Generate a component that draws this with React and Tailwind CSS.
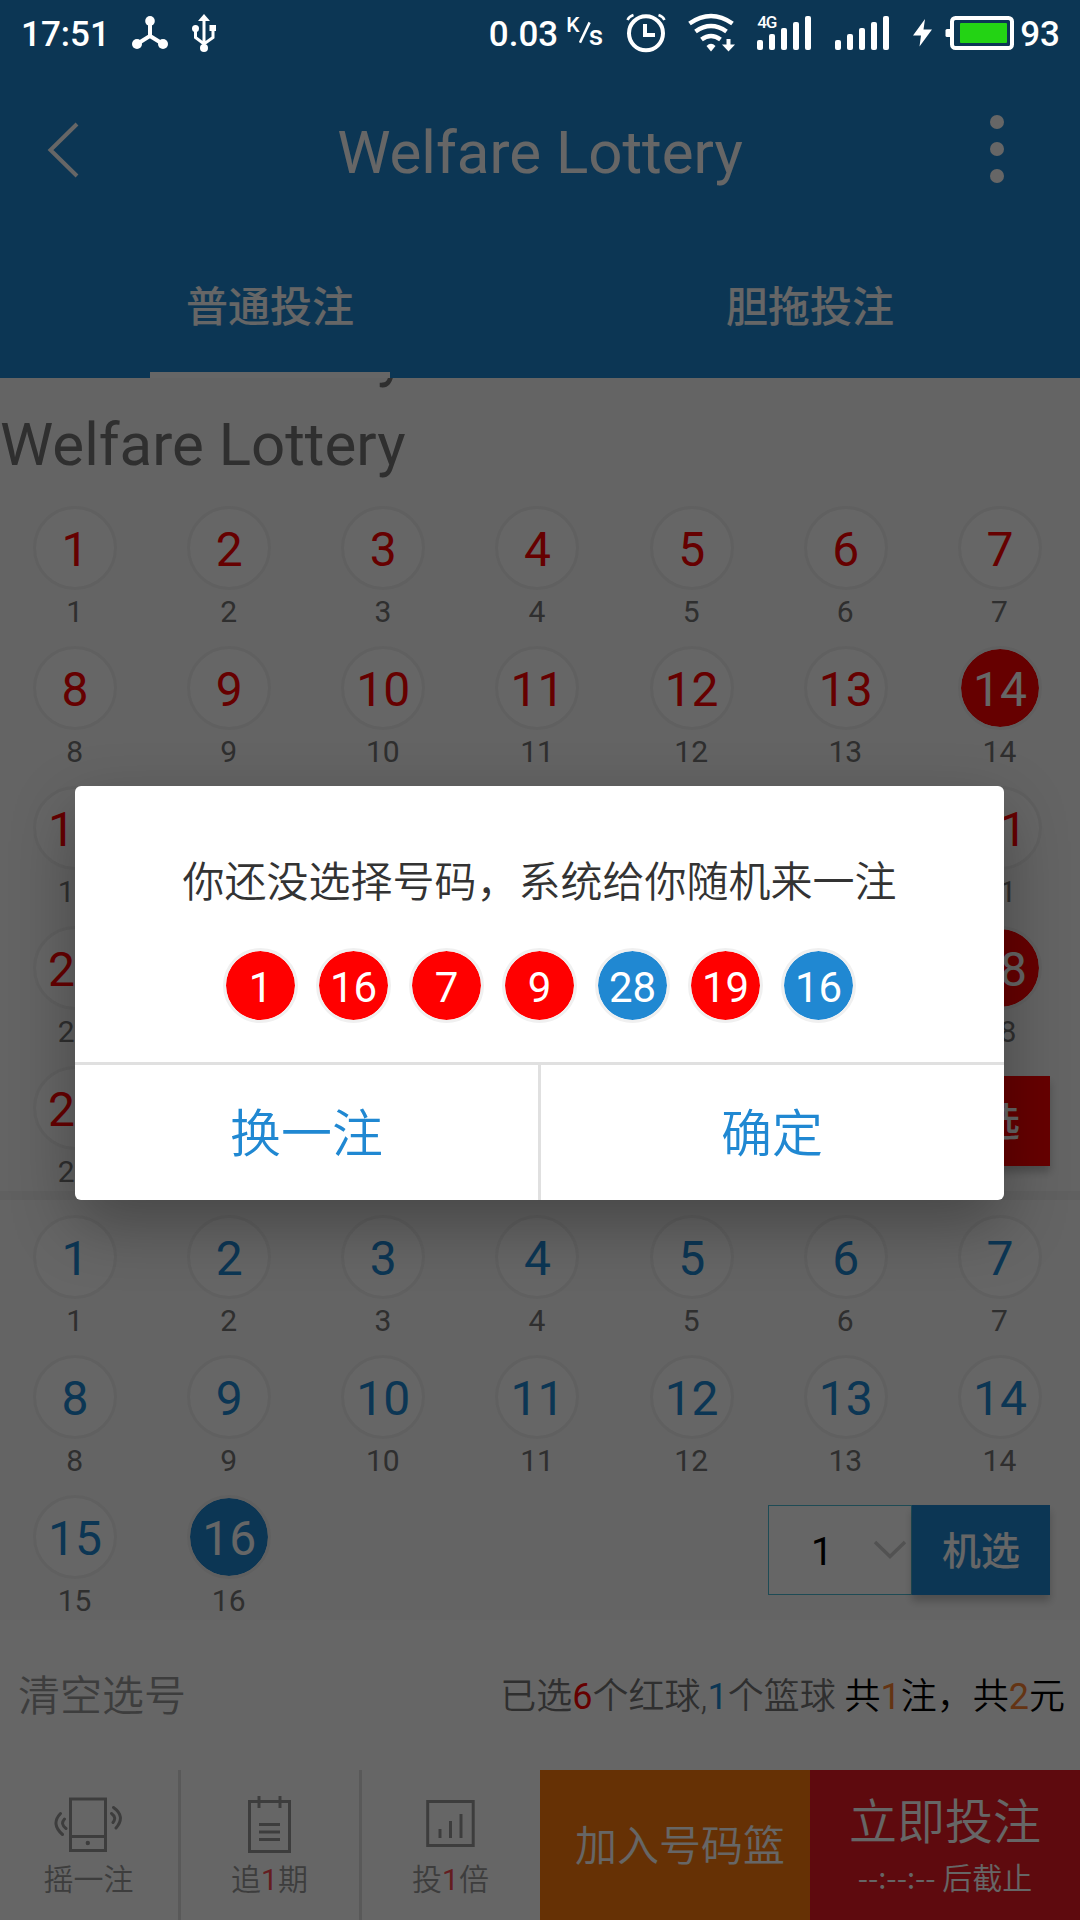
import React from "react";

const RED_SELECTED = [14, 17, 19, 24, 26, 28];
const BLUE_SELECTED = [16];
const RED_NUMBERS = Array.from({ length: 33 }, (_, i) => i + 1);
const BLUE_NUMBERS = Array.from({ length: 16 }, (_, i) => i + 1);

const RANDOM_PICK = [
  { n: 1, blue: false },
  { n: 16, blue: false },
  { n: 7, blue: false },
  { n: 9, blue: false },
  { n: 28, blue: true },
  { n: 19, blue: false },
  { n: 16, blue: true },
];

function ShareIcon() {
  return (
    <svg className="ml-[26px] h-9 w-[38px] shrink-0" viewBox="131 15 38 36" fill="#fff" stroke="#fff">
      <path d="M150 21V36L137 44M150 36L163 44" fill="none" strokeWidth="4" />
      <ellipse cx="150" cy="21" rx="4.8" ry="5" stroke="none" />
      <circle cx="137" cy="44" r="5" stroke="none" />
      <circle cx="163" cy="44" r="5" stroke="none" />
    </svg>
  );
}

function UsbIcon() {
  return (
    <svg className="ml-[22px] h-10 w-[26px] shrink-0" viewBox="191 13 26 40" fill="#fff">
      <path d="M204 18V46M195.500 28V37.500L204 44L213 37.500V28" fill="none" stroke="#fff" strokeWidth="3" />
      <path d="M204 14L210 21H198Z" />
      <circle cx="195.500" cy="28.500" r="3.500" />
      <rect x="209.500" y="25" width="6.500" height="6" />
      <circle cx="204" cy="48" r="4" />
    </svg>
  );
}

function AlarmIcon() {
  return (
    <svg className="ml-[22px] h-10 w-[42px] shrink-0" viewBox="625 13 42 40" fill="none" stroke="#fff">
      <circle cx="646" cy="33.300" r="17" strokeWidth="4" />
      <path d="M645 24V35H655" strokeWidth="4" />
      <path d="M627.500 20Q629 16.500 633.500 15M664.500 20Q663 16.500 658.500 15" strokeWidth="2.500" />
    </svg>
  );
}

function WifiIcon() {
  return (
    <svg className="ml-5 h-10 w-[50px] shrink-0" viewBox="687 13 50 40" fill="none" stroke="#fff" strokeWidth="4.500">
      <path d="M689.500 23.500Q711 8.500 732.500 23.500" />
      <path d="M695.500 31.500Q711 20.500 726.500 31.500" />
      <path d="M701.500 39.500Q711 32.500 720.500 39.500" />
      <path d="M706.500 46Q711 41.500 715.500 46L711 51.500Z" fill="#fff" stroke="none" />
      <path d="M728.500 39V46" strokeWidth="4" />
      <path d="M722 44.500H735L728.500 51.500Z" fill="#fff" stroke="none" />
    </svg>
  );
}

function SignalBars() {
  return (
    <svg className="h-[34px] w-[54px]" viewBox="0 0 54 34" fill="#fff">
      <rect x="0" y="24" width="6" height="10" rx="2" />
      <rect x="12" y="18" width="6" height="16" rx="2" />
      <rect x="24" y="12" width="6" height="22" rx="2" />
      <rect x="36" y="6" width="6" height="28" rx="2" />
      <rect x="48" y="0" width="6" height="34" rx="2" />
    </svg>
  );
}

function BoltIcon() {
  return (
    <svg className="ml-6 h-7 w-5 shrink-0" viewBox="913 19 20 28" fill="#fff">
      <path d="M925 19L913 35.500H921L919.500 46.500L932 29.500H923.500Z" />
    </svg>
  );
}

function BatteryIcon() {
  return (
    <svg className="ml-3 h-[34px] w-[69px] shrink-0" viewBox="945 16 69 34">
      <rect x="945.500" y="29" width="6" height="8" rx="1.500" fill="#fff" />
      <rect x="952" y="18" width="60" height="30" rx="3.500" fill="none" stroke="#fff" strokeWidth="4" />
      <rect x="960" y="23" width="47" height="20" rx="1" fill="#23d314" />
    </svg>
  );
}

function StatusBar() {
  return (
    <div className="relative z-20 flex h-[66px] items-center pl-[21px] pr-5 text-[35px] leading-none font-medium text-white">
      <span className="w-[84px] pt-[2px]">17:51</span>
      <ShareIcon />
      <UsbIcon />
      <span className="ml-auto pt-[2px]">0.03</span>
      <span className="ml-[8px] flex h-10 w-[37px] items-start leading-none">
        <span className="mt-[2px] w-[13px] text-[21px]">K</span>
        <svg className="mt-[8px] h-[23px] w-[12px]" viewBox="0 0 12 23">
          <path d="M1 22L11 1" stroke="#fff" strokeWidth="2.600" />
        </svg>
        <span className="mt-[9px] -ml-[2px] text-[28px]">s</span>
      </span>
      <AlarmIcon />
      <WifiIcon />
      <span className="relative ml-5 flex">
        <span className="absolute -top-[2px] left-0 text-[17px] leading-none tracking-[-1px]">4G</span>
        <SignalBars />
      </span>
      <span className="ml-6 flex">
        <SignalBars />
      </span>
      <BoltIcon />
      <BatteryIcon />
      <span className="ml-[6px] pt-[2px]">93</span>
    </div>
  );
}

function Header() {
  return (
    <header className="flex h-[378px] flex-col bg-[#2088d2] text-white">
      <StatusBar />
      <div className="flex h-[168px] items-center justify-between pr-[74px] pl-[46px]">
        <svg className="h-[56px] w-[36px]" viewBox="46 122 36 56" fill="none" stroke="#fff" strokeWidth="4">
          <path d="M77 124L50.500 150L77 176" />
        </svg>
        <h1 className="pt-[5px] pl-[10px] text-[60px] leading-none">Welfare Lottery</h1>
        <svg className="h-[70px] w-[18px]" viewBox="0 0 18 70" fill="#fff">
          <circle cx="9" cy="7" r="7" />
          <circle cx="9" cy="34" r="7" />
          <circle cx="9" cy="61" r="7" />
        </svg>
      </div>
      <nav className="grid h-[144px] grid-cols-2 text-[42px] font-medium">
        <div className="flex flex-col items-center">
          <span className="flex flex-1 items-center pt-[9px]">普通投注</span>
          <span className="h-[6px] w-60 bg-white" />
        </div>
        <div className="flex flex-col items-center pb-[6px]">
          <span className="flex flex-1 items-center pt-[9px]">胆拖投注</span>
        </div>
      </nav>
    </header>
  );
}

function Ball({ n, selected, blue }) {
  const idle = blue ? "bg-white text-[#2088d2]" : "bg-white text-[#ff0000]";
  const active = blue ? "bg-[#2088d2] text-white" : "bg-[#ff0000] text-white";
  return (
    <div className="flex flex-col items-center">
      <span
        className={
          "flex size-[84px] items-center justify-center rounded-full border-3 border-[#f0f0f0] bg-clip-padding pt-[3px] text-[48px] leading-none " +
          (selected ? active : idle)
        }
      >
        {n}
      </span>
      <span className="mt-1 pr-px text-[30px] leading-[36px] text-[#757575]">{n}</span>
    </div>
  );
}

function QuickPick({ blue }) {
  return (
    <div className="col-span-2 col-start-6 mt-[10px] mr-[27px] flex h-[90px] justify-self-end">
      <div className="flex w-36 items-center border border-[#4dbbd5] bg-white pl-[42px] text-[39px] leading-none text-black">
        <span className="flex-1 pt-[4px]">1</span>
        <svg className="mr-[4px] h-[20px] w-[34px]" viewBox="0 0 34 20" fill="none" stroke="#cdcdcd" strokeWidth="3.500">
          <path d="M2 2L17 16.500L32 2" />
        </svg>
      </div>
      <div
        className={
          "flex w-[138px] items-center justify-center pt-[4px] text-[39px] leading-none font-medium text-white shadow-[0_6px_8px_rgba(0,0,0,0.22)] " +
          (blue ? "bg-[#2088d2]" : "bg-[#ff0000]")
        }
      >
        机选
      </div>
    </div>
  );
}

function BallGrid({ numbers, selected, blue }) {
  return (
    <div className="-ml-[2px] grid w-[1079px] grid-cols-7 gap-y-4">
      {numbers.map((n) => (
        <Ball key={n} n={n} blue={blue} selected={selected.includes(n)} />
      ))}
      <QuickPick blue={blue} />
    </div>
  );
}

function PhoneIcon() {
  return (
    <svg className="h-[60px] w-[70px]" viewBox="54 1795 70 60" fill="none" stroke="#999" strokeWidth="3">
      <rect x="70.500" y="1799" width="35" height="51.500" />
      <path d="M70.500 1836.500H105.500" />
      <circle cx="87.800" cy="1843" r="2.200" fill="#999" stroke="none" />
      <path
        d="M60.500 1813.500Q50.500 1824 62.500 1834.500M64.500 1819Q60 1824 66 1828.500M113.500 1807.500Q126 1816.500 116 1828M111.500 1813.500Q117 1817.500 113 1822.500"
        strokeLinecap="round"
      />
    </svg>
  );
}

function NotesIcon() {
  return (
    <svg className="h-[60px] w-[46px]" viewBox="247 1795 46 60" fill="none" stroke="#999" strokeWidth="3">
      <rect x="249.500" y="1801.500" width="40" height="50" />
      <path d="M259 1796V1808M280 1796V1808M259 1824.500H280M259 1832H280M259 1839.500H280" />
    </svg>
  );
}

function ChartIcon() {
  return (
    <svg className="h-[60px] w-[50px]" viewBox="426 1795 50 60" fill="none" stroke="#999" strokeWidth="3">
      <rect x="427.700" y="1801.500" width="45.500" height="44" />
      <path d="M440 1829V1838M450.500 1821V1838M461 1814V1838" />
    </svg>
  );
}

function Tool({ icon, className, children }) {
  return (
    <div className={"flex flex-col items-center pt-[25px] text-[30px] leading-[36px] font-[350] text-[#999] " + className}>
      {icon}
      <span className="mt-[7px] pr-px">{children}</span>
    </div>
  );
}

function Footer() {
  return (
    <footer className="bg-white">
      <div className="flex h-[150px] items-center justify-between pt-[4px] pr-[15px] pl-[18px] font-[350]">
        <span className="text-[42px] leading-none text-[#999]">清空选号</span>
        <p className="text-[36px] leading-none whitespace-pre text-[#757575]">
          已选<span className="font-normal text-[#ff0000]">6</span>个红球,
          <span className="font-normal text-[#2088d2]">1</span>个篮球{" "}
          <span className="text-black">
            共<span className="font-normal text-[#fb8332]">1</span>注，共
            <span className="font-normal text-[#fb8332]">2</span>元
          </span>
        </p>
      </div>
      <div className="flex h-[150px]">
        <Tool className="w-[181px] border-r-3 border-[#dfdfdf]" icon={<PhoneIcon />}>
          摇一注
        </Tool>
        <Tool className="w-[181px] border-r-3 border-[#dfdfdf]" icon={<NotesIcon />}>
          追<span className="font-normal text-[#fa4a52]">1</span>期
        </Tool>
        <Tool className="w-[178px]" icon={<ChartIcon />}>
          投<span className="font-normal text-[#fa4a52]">1</span>倍
        </Tool>
        <div className="flex w-[270px] items-center justify-center bg-[#ff7b0d] pt-[4px] pl-[10px] text-[42px] leading-none font-[350] text-white">
          加入号码篮
        </div>
        <div className="flex w-[270px] flex-col items-center bg-[#eb1b23] pt-[25px] font-[350] text-white">
          <span className="text-[48px] leading-[56px]">立即投注</span>
          <span className="mt-[7px] font-['Noto_Sans_CJK_SC',sans-serif] text-[30px] leading-[36px]">--:--:-- 后截止</span>
        </div>
      </div>
    </footer>
  );
}

function Dialog() {
  return (
    <div className="absolute inset-0 z-10 bg-black/60">
      <div className="mt-[786px] ml-[75px] flex h-[414px] w-[929px] flex-col overflow-hidden rounded-md bg-white shadow-[0_24px_64px_rgba(0,0,0,0.3)]">
        <div className="flex h-[276px] flex-col items-center">
          <p className="mt-[72px] text-[42px] leading-[50px] font-[350] text-[#333]">
            你还没选择号码，系统给你随机来一注
          </p>
          <div className="mt-10 flex gap-[18px]">
            {RANDOM_PICK.map((b, i) => (
              <span
                key={i}
                className={
                  "flex size-[75px] items-center justify-center rounded-full border-3 border-[#f0f0f0] bg-clip-padding pt-[4px] text-[42px] leading-none text-white " +
                  (b.blue ? "bg-[#2088d2]" : "bg-[#ff0000]")
                }
              >
                {b.n}
              </span>
            ))}
          </div>
        </div>
        <div className="flex flex-1 border-t-3 border-[#e0e0e0] text-[51px] leading-none font-[350] text-[#2088d2]">
          <div className="flex w-[466px] items-center justify-center border-r-3 border-[#e0e0e0] pt-[3px]">换一注</div>
          <div className="flex flex-1 items-center justify-center pt-[3px] pr-px">确定</div>
        </div>
      </div>
    </div>
  );
}

export default function App() {
  return (
    <div className="relative h-[1920px] w-[1080px] overflow-hidden bg-[#fafafa] font-['Roboto','Noto_Sans_CJK_SC',sans-serif]">
      <Header />
      <main className="h-[1242px] overflow-hidden">
        <div className="-mt-[68px] text-[60px] leading-[90px] text-[#757575]">
          <p>Welfare Lottery</p>
          <p>Welfare Lottery</p>
        </div>
        <div className="mt-4">
          <BallGrid numbers={RED_NUMBERS} selected={RED_SELECTED} />
        </div>
        <div className="mt-px mb-[15px] h-[9px] bg-[#efefef]" />
        <BallGrid numbers={BLUE_NUMBERS} selected={BLUE_SELECTED} blue />
      </main>
      <Footer />
      <Dialog />
    </div>
  );
}
